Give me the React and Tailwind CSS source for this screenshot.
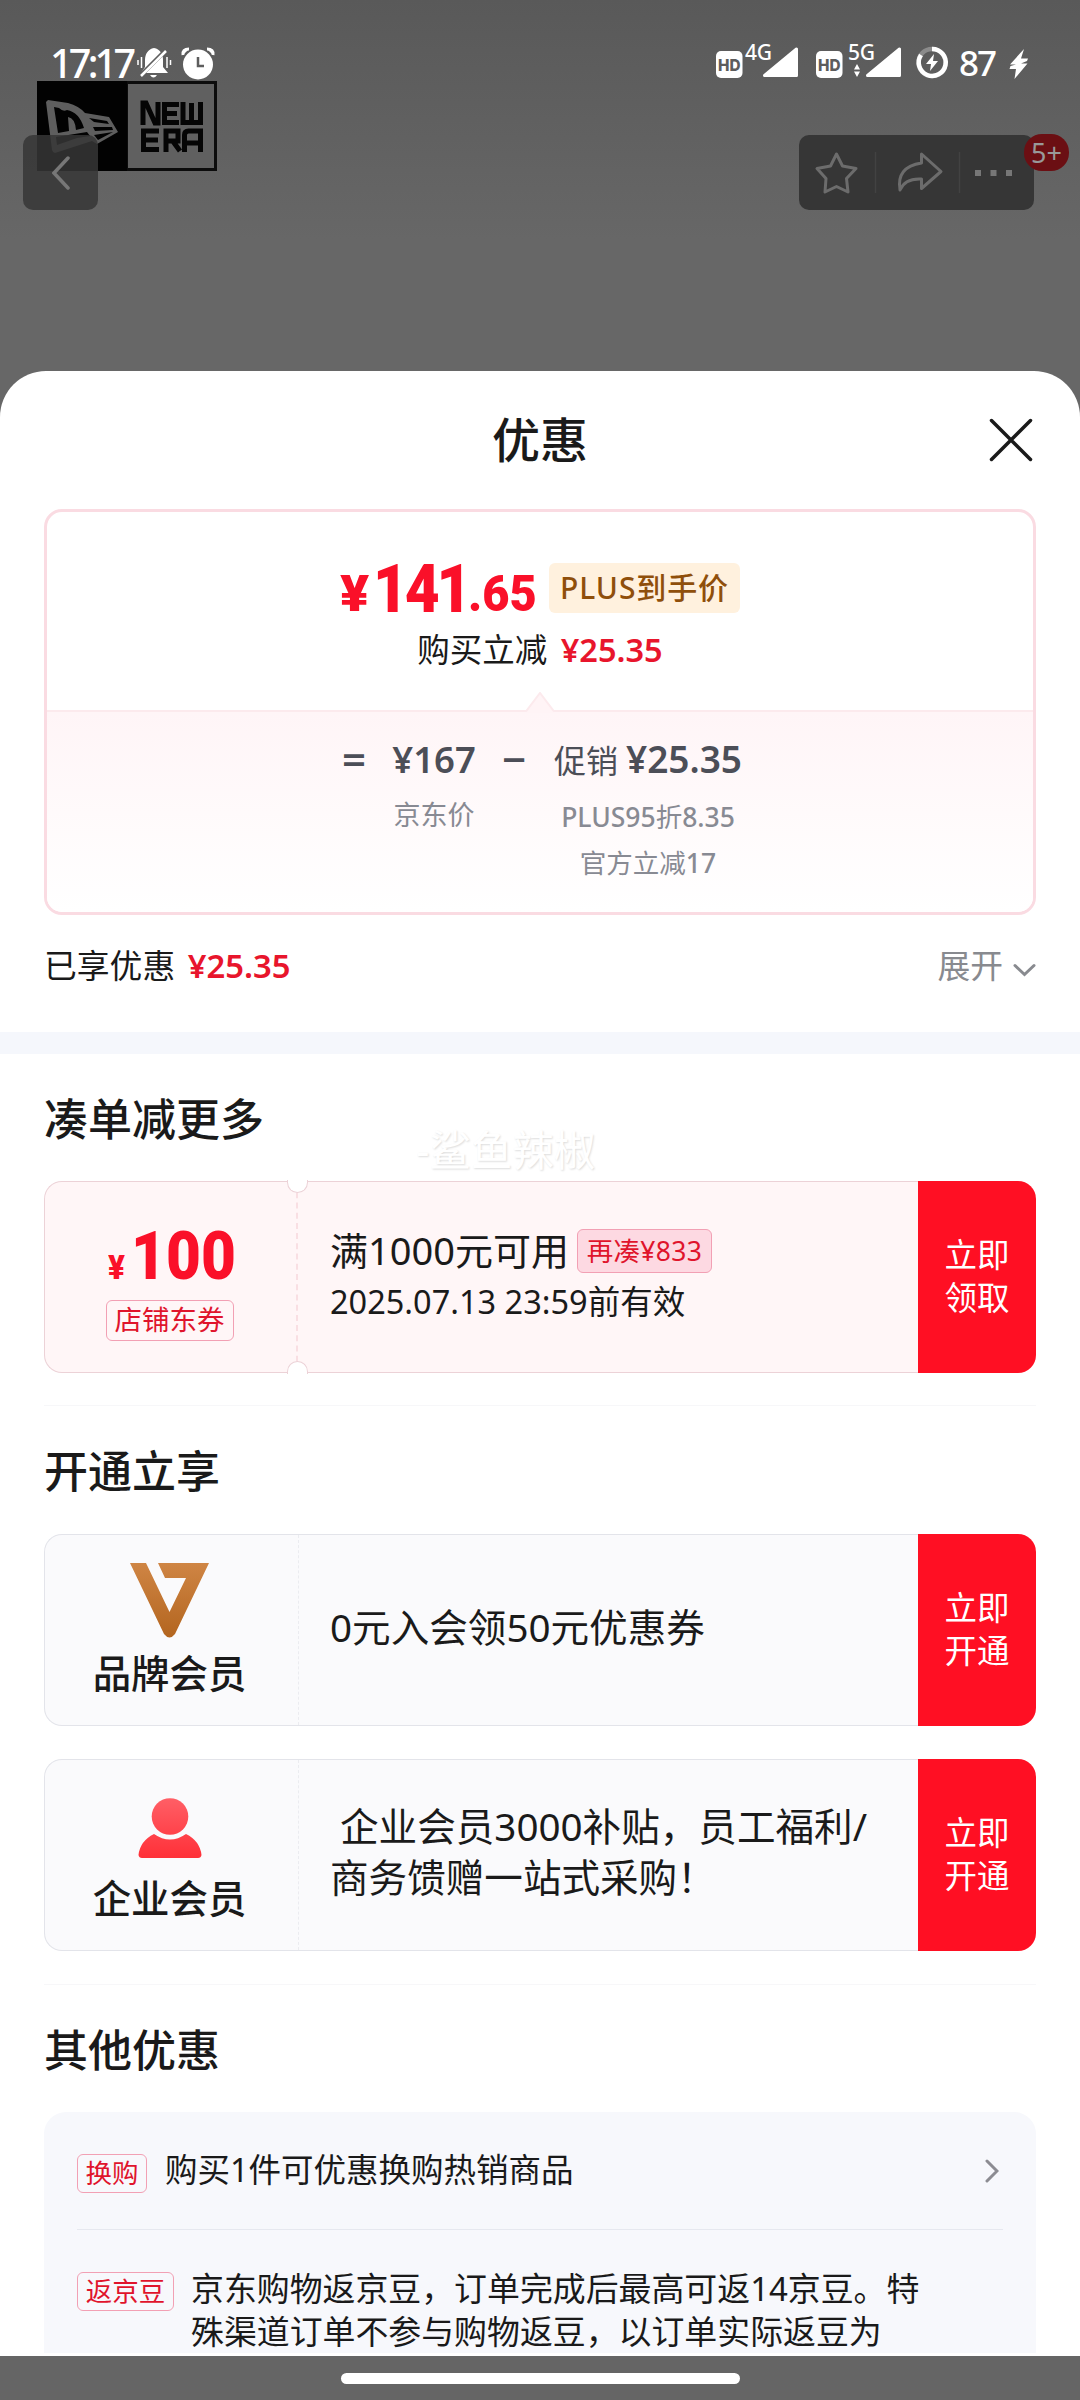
import clsx from 'clsx'

const memberCards = [
  { title: '品牌会员', icon: BrandIcon, lines: ['0元入会领50元优惠券'] },
  { title: '企业会员', icon: PersonIcon, lines: ['\u00a0企业会员3000补贴，员工福利/', '商务馈赠一站式采购！'] },
]

function NewEraLogo() {
  return (
    <svg className="absolute left-[37px] top-[81px] w-[180px] h-[90px]" viewBox="0 0 180 90">
      <rect width="180" height="90" fill="#0c0c0c" />
      <rect width="90" height="90" fill="#020202" />
      <rect x="91" y="3" width="86" height="84" fill="#606060" />
      <path d="M11 19L31 22Q42 25 48 32L72 36L81 51L60 63L55 60L18 72Q16 72 15 69L9 21Z" fill="#5e5e5e" />
      <g fill="#020202">
        <path d="M17 26L22 27Q26 31 30 29Q42 31 47 47L39 49Q38 37 31 36L32 50L21 52Z" />
        <path d="M19 56L50 51L53 55L40 57L20 64Z" />
        <path d="M52 37L70 40L72 43L57 41Z" />
        <path d="M56 46L75 46L76 49L58 50Z" />
        <path d="M57 54L76 51L61 59Z" />
      </g>
      <g fill="none" stroke="#050505" strokeWidth="5">
        <path d="M106 44V22H109L118 42H121V21M142 23.500H127.500V41.500H142M127 32.500H140M146 21V41.500H163.500V21M154.500 22V42" />
        <path d="M122 50H106.500V68.500H122M106 59H121M129 71V50H141V60H130M135 59L143 70M147.500 71V54Q147.500 50 151.500 50H163.500V71M147 62H163" />
      </g>
    </svg>
  )
}

function StatusIcons() {
  return (
    <svg className="absolute left-0 top-0 w-full h-[100px]" viewBox="0 0 1080 100">
      {/* muted bell */}
      <g fill="#fff">
        <path d="M154 48c-6 1-9 6-9 12v7l-4 6h27l-5-6v-7c0-6-3-11-9-12z" />
        <path d="M150 75h7q-3.500 5-7 0z" />
        <path d="M141.500 57v11M138 60v5M167 57v11M170.500 60v5" stroke="#fff" strokeWidth="1.500" />
        <path d="M142 74L166 50" stroke="#5d5d5d" strokeWidth="4.500" />
        <path d="M141 76L166 51" stroke="#fff" strokeWidth="2.500" />
      </g>
      {/* alarm clock */}
      <circle cx="198" cy="64.500" r="15" fill="#fff" />
      <path d="M183 55q-1-6 6-6M207 49q7 0 6 6" stroke="#fff" strokeWidth="3" fill="#fff" />
      <path d="M198 57V66H204" stroke="#5d5d5d" strokeWidth="2.500" fill="none" />
      {/* sim cards */}
      <rect x="716" y="51" width="26.500" height="27" rx="5" fill="#fff" />
      <rect x="816" y="51" width="26.500" height="27" rx="5" fill="#fff" />
      <path d="M764.500 75.500L796.500 49V75.500Z" fill="#fff" stroke="#fff" strokeWidth="3" strokeLinejoin="round" />
      <path d="M867.500 75.500L899.500 49V75.500Z" fill="#fff" stroke="#fff" strokeWidth="3" strokeLinejoin="round" />
      <path d="M854 69.500L857 64L860 69.500ZM854 71.500L857 77L860 71.500Z" fill="#fff" />
      {/* battery */}
      <circle cx="932" cy="62.500" r="13.500" fill="none" stroke="#8b8b8b" strokeWidth="4.500" />
      <path d="M932 49A13.500 13.500 0 1 1 921 55" fill="none" stroke="#fff" strokeWidth="4.500" />
      <path d="M934 54L926 64H931L930 71L938 61H933Z" fill="#fff" />
      <path d="M1024 49L1010 64.500H1016L1010.500 66L1009.500 69H1016L1014.500 79L1027.500 63.500H1021L1027 61L1028 58.500H1021Z" fill="#fff" />
      <g fill="#5c5c5c" fontFamily="Inter, sans-serif" fontWeight="800" fontSize="16.5">
        <text x="718" y="70.500" textLength="22.500" lengthAdjust="spacingAndGlyphs">HD</text>
        <text x="818" y="70.500" textLength="22.500" lengthAdjust="spacingAndGlyphs">HD</text>
      </g>
      <g fill="#fff" fontFamily="'Noto Sans', sans-serif" fontWeight="500">
        <text x="50" y="78" fontSize="39.5" textLength="86">17:17</text>
        <text x="745" y="60" fontSize="21" textLength="27">4G</text>
        <text x="848" y="60" fontSize="21" textLength="27">5G</text>
        <text x="959" y="76" fontSize="35" textLength="38">87</text>
      </g>
    </svg>
  )
}

function BrandIcon() {
  return (
    <svg className="w-[80px] h-[75px]" viewBox="0 0 80 75">
      <defs>
        <linearGradient id="bronze" x1="0" y1="0" x2="0" y2="1">
          <stop offset="0" stopColor="#cf8544" />
          <stop offset="1" stopColor="#b3651f" />
        </linearGradient>
      </defs>
      <path d="M0 0H16L39.500 49L56 15H35L28 0H79L45 71Q39.500 78 34 71Z" fill="url(#bronze)" />
    </svg>
  )
}

function PersonIcon() {
  return (
    <svg className="w-[64px] h-[60px]" viewBox="0 0 64 60">
      <defs>
        <linearGradient id="person" gradientUnits="userSpaceOnUse" x1="0" y1="0" x2="0" y2="60">
          <stop offset="0" stopColor="#ff5f66" />
          <stop offset="1" stopColor="#ff3038" />
        </linearGradient>
      </defs>
      <g fill="url(#person)">
        <circle cx="32" cy="18.500" r="18.300" />
        <path d="M16 36Q32 47 48 36Q62 43 63.500 57Q63 60 60 60H4Q1 60 .5 57Q2 43 16 36Z" />
      </g>
    </svg>
  )
}

function RedButton({ top, bottom }) {
  return (
    <button className="w-[118px] shrink-0 pb-[2px] bg-[#ff0f23] text-white text-[32.5px] leading-[43px] flex flex-col items-center justify-center">
      <span>{top}</span>
      <span>{bottom}</span>
    </button>
  )
}

function SectionTitle({ children, className }) {
  return <h2 className={clsx('text-[44px] leading-[60px] font-medium text-[#1a1a1a]', className)}>{children}</h2>
}

function Tag({ children, className }) {
  return (
    <span className={clsx('shrink-0 border border-[#f2a0b4] rounded-[6px] text-[#e0142c] text-center', className)}>
      {children}
    </span>
  )
}

function TopBar() {
  return (
    <header className="relative h-[371px] shrink-0">
      <NewEraLogo />
      <StatusIcons />
      <button className="absolute left-[23px] top-[135px] w-[75px] h-[75px] rounded-[10px] bg-[#363636]/85 flex items-center justify-center">
        <svg className="w-[18px] h-[36px]" viewBox="0 0 18 36" fill="none" stroke="#777" strokeWidth="3.5" strokeLinecap="round">
          <path d="M16 3L2 18L16 33" />
        </svg>
      </button>
      <div className="absolute left-[799px] top-[135px] w-[235px] h-[75px] rounded-[10px] bg-[#363636]">
        <svg className="w-full h-full" viewBox="0 0 235 75" fill="none" stroke="#6c6c6c" strokeWidth="3" strokeLinejoin="round">
          <path d="M37.500 19L43.500 31L57 33.500L47.500 43.500L49 57L37.500 51.500L26 57L27 43.500L18 33.500L31.500 31Z" />
          <path d="M122.500 19L142 36.500L122.500 53.500V44Q106 43 101 55Q97 32 122.500 28Z" />
          <path d="M76.500 17V58M160.500 17V58" stroke="#424242" strokeWidth="1.500" />
          <path d="M176 38h6M191.500 38h6M207 38h6" stroke="#777" strokeWidth="6" />
        </svg>
      </div>
      <span className="absolute left-[1024px] top-[134px] w-[45px] h-[37px] rounded-[18px] bg-[#6b0f13] text-[#999] text-[27px] leading-[37px] text-center">
        5+
      </span>
    </header>
  )
}

function PriceCard() {
  return (
    <section className="mt-[34px] h-[406px] border-[3px] border-[#fadbe2] rounded-[18px] overflow-hidden flex flex-col">
      <div className="h-[198px] flex flex-col items-center pt-[44px]">
        <div className="flex items-start text-[#fa1029]">
          <span className="font-['Roboto'] font-black text-[50px] leading-[50px] w-[33px] mt-[13px] origin-left scale-x-[1.08]">¥</span>
          <span className="font-['Roboto'] font-black text-[67px] leading-[67px] tracking-[-3.5px] w-[95px] origin-left scale-x-[0.9]">141</span>
          <span className="font-['Roboto'] font-black text-[50px] leading-[50px] w-[71px] mt-[13px] origin-left scale-x-[0.94]">.65</span>
          <span className="mt-[7px] ml-[10px] w-[191px] h-[50px] rounded-[6px] bg-[#fff1de] text-[#8f4f0b] text-[30px] leading-[50px] tracking-[0.9px] font-medium text-center whitespace-nowrap">
            PLUS到手价
          </span>
        </div>
        <p className="mt-[5px] text-[32.5px] leading-[44px] text-[#1a1a1a]">
          购买立减 <b className="ml-[5px] font-semibold text-[#e8152c]">¥25.35</b>
        </p>
      </div>
      <div className="relative flex-1 border-t-2 border-[#fceaed] bg-gradient-to-b from-[#fff5f7] to-white">
        <svg className="absolute left-[479px] top-[-20px] w-[28px] h-[21px]" viewBox="0 0 28 21">
          <path d="M0 19.500L14 1L28 19.500V21H0Z" fill="#fff4f6" />
          <path d="M0 19.500L14 1L28 19.500" fill="none" stroke="#fceaed" strokeWidth="2" />
        </svg>
        <div className="flex pl-[295px] pt-[21px] text-[#4c4e57]">
          <span className="w-[52px] text-[42px] leading-[52px] font-semibold">=</span>
          <div className="w-[80px] flex flex-col items-center whitespace-nowrap">
            <span className="text-[36.5px] leading-[52px] font-semibold">¥167</span>
            <span className="mt-[7px] text-[27px] leading-[46px] text-[#888a93]">京东价</span>
          </div>
          <span className="w-[80px] text-center text-[42px] leading-[52px] font-semibold">−</span>
          <div className="w-[188px] flex flex-col items-center whitespace-nowrap">
            <span className="text-[32px] leading-[52px]">
              促销<b className="ml-2 text-[37px] font-semibold">¥25.35</b>
            </span>
            <span className="mt-[7px] text-[26.5px] leading-[46px] text-[#888a93]">
              <b className="font-medium">PLUS95</b>折<b className="font-medium">8.35</b>
            </span>
            <span className="text-[26.5px] leading-[46px] text-[#888a93]">
              官方立减<b className="font-medium">17</b>
            </span>
          </div>
        </div>
      </div>
    </section>
  )
}

function ShopCoupon() {
  return (
    <div className="relative h-[192px] mt-[32px] flex">
      <div className="flex-1 flex border border-r-0 border-[#ecd2d7] rounded-l-[18px] bg-[#fff6f7]">
        <div className="w-[253px] pr-[2px] shrink-0 flex flex-col items-center border-r-2 border-dashed border-[#f9dfe3] pt-[41px]">
          <div className="flex items-baseline text-[#fa1029] font-['Roboto'] font-black">
            <span className="text-[33px] w-[23px] origin-left scale-x-[0.95]">¥</span>
            <span className="text-[67px] leading-[67px] w-[101px] origin-left scale-x-[0.9]">100</span>
          </div>
          <Tag className="mt-[7px] w-[128px] h-[41px] text-[27.500px] leading-[37px]">店铺东券</Tag>
        </div>
        <div className="pl-[32px] pt-[43px] text-[#1a1a1a]">
          <div className="flex items-center h-[51px] text-[38px]">
            满1000元可用
            <Tag className="ml-[8px] w-[135px] h-[44px] bg-[#fdd9e2] text-[26.5px] tracking-[0.3px] leading-[42px]">再凑¥833</Tag>
          </div>
          <p className="text-[32.500px] leading-[51px]">2025.07.13 23:59前有效</p>
        </div>
      </div>
      <div className="flex rounded-r-[18px] overflow-hidden">
        <RedButton top="立即" bottom="领取" />
      </div>
      {/* ticket notches */}
      <span className="absolute left-[243px] top-[-1px] w-[21px] h-[13px] rounded-b-full bg-white border border-t-0 border-[#ecd2d7]" />
      <span className="absolute left-[243px] bottom-[-1px] w-[21px] h-[13px] rounded-t-full bg-white border border-b-0 border-[#ecd2d7]" />
    </div>
  )
}

function MemberCard({ title, icon: Icon, lines }) {
  return (
    <div className="h-[192px] flex rounded-r-[18px] overflow-hidden">
      <div className="flex-1 flex border border-r-0 border-[#e3e4ea] rounded-l-[18px] bg-[#fafafc]">
        <div className="w-[254px] pr-[4px] shrink-0 flex flex-col items-center justify-end border-r border-dashed border-[#ebecf0] pb-[26px]">
          <Icon />
          <span className={clsx('text-[38.4px] leading-[52px] font-medium text-[#1a1a1a]', lines.length > 1 ? 'mt-[14px]' : 'mt-[9px]')}>
            {title}
          </span>
        </div>
        <div className="pl-[31px] pb-[6px] flex flex-col justify-center text-[38.600px] leading-[51px] text-[#1a1a1a] whitespace-nowrap">
          {lines.map((line) => <p key={line}>{line}</p>)}
        </div>
      </div>
      <RedButton top="立即" bottom="开通" />
    </div>
  )
}

function OtherOffers() {
  return (
    <div className="mt-[32px] rounded-t-[22px] bg-[#f7f8fc] px-[33px] text-[32.500px] leading-[43px] text-[#1a1a1a]">
      <div className="h-[118px] flex items-start pt-[36px] border-b border-[#e6e8ef]">
        <Tag className="mt-[6px] w-[70px] h-[39px] text-[26.500px] leading-[37px]">换购</Tag>
        <p className="ml-[18px] flex-1">购买1件可优惠换购热销商品</p>
        <svg className="mt-[11px] mr-[4px] w-[14px] h-[24px]" viewBox="0 0 14 24" fill="none" stroke="#8c8c92" strokeWidth="3" strokeLinecap="round">
          <path d="M2 2L12 12L2 22" />
        </svg>
      </div>
      <div className="flex items-start pt-[37px] text-[32.9px]">
        <Tag className="mt-[5px] w-[97px] h-[39px] text-[26.500px] leading-[37px]">返京豆</Tag>
        <div className="ml-[17px] whitespace-nowrap">
          <p>京东购物返京豆，订单完成后最高可返14京豆。特</p>
          <p>殊渠道订单不参与购物返豆，以订单实际返豆为</p>
        </div>
      </div>
    </div>
  )
}

export default function App() {
  return (
    <div className="w-[1080px] h-[2400px] overflow-hidden flex flex-col bg-[linear-gradient(#595959_0,#676767_240px,#676767)] font-['Noto_Sans','Noto_Sans_CJK_SC',sans-serif]">
      <TopBar />
      <main className="relative h-[1985px] shrink-0 overflow-hidden rounded-t-[46px] bg-white">
        <div className="px-[44px]">
          <div className="pt-[34px] flex items-center">
            <h1 className="flex-1 pl-[47px] text-center text-[48px] leading-[40px] font-medium text-[#1a1a1a] py-[15px]">优惠</h1>
            <svg className="w-[44px] h-[44px] mr-[3px]" viewBox="0 0 44 44" stroke="#1a1a1a" strokeWidth="3.5" strokeLinecap="round">
              <path d="M2.500 2.500L41.500 41.500M41.500 2.500L2.500 41.500" />
            </svg>
          </div>
          <PriceCard />
          <div className="mt-[28px] flex items-center justify-between text-[32.8px] leading-[46px]">
            <p className="text-[#1a1a1a]">
              已享优惠 <b className="ml-1 font-semibold text-[#e8152c]">¥25.35</b>
            </p>
            <p className="flex items-center text-[#888a8f]">
              展开
              <svg className="ml-[10px] mt-[8px] w-[23px] h-[14px]" viewBox="0 0 23 14" fill="none" stroke="#888a8f" strokeWidth="3" strokeLinecap="round">
                <path d="M2 2.500L11.500 11.500L21 2.500" />
              </svg>
            </p>
          </div>
        </div>
        <div className="mt-[43px] h-[22px] bg-[#f5f7fc]" />
        <div className="px-[44px]">
          <SectionTitle className="mt-[35px]">凑单减更多</SectionTitle>
          <ShopCoupon />
          <hr className="mt-[32px] border-[#f7f7f9]" />
          <SectionTitle className="mt-[35px]">开通立享</SectionTitle>
          <div className="mt-[33px] flex flex-col gap-[33px]">
            {memberCards.map((card) => <MemberCard key={card.title} {...card} />)}
          </div>
          <hr className="mt-[33px] border-[#f7f7f9]" />
          <SectionTitle className="mt-[35px]">其他优惠</SectionTitle>
          <OtherOffers />
        </div>
        <span className="absolute left-[416px] top-[750px] text-[41.5px] leading-[58px] text-white [text-shadow:1px_1px_2px_#ddd]">-鲨鱼辣椒</span>
      </main>
      <footer className="h-[44px] shrink-0 bg-[#656565] flex justify-center pt-[17px]">
        <div className="w-[399px] h-[11px] rounded-full bg-white" />
      </footer>
    </div>
  )
}
